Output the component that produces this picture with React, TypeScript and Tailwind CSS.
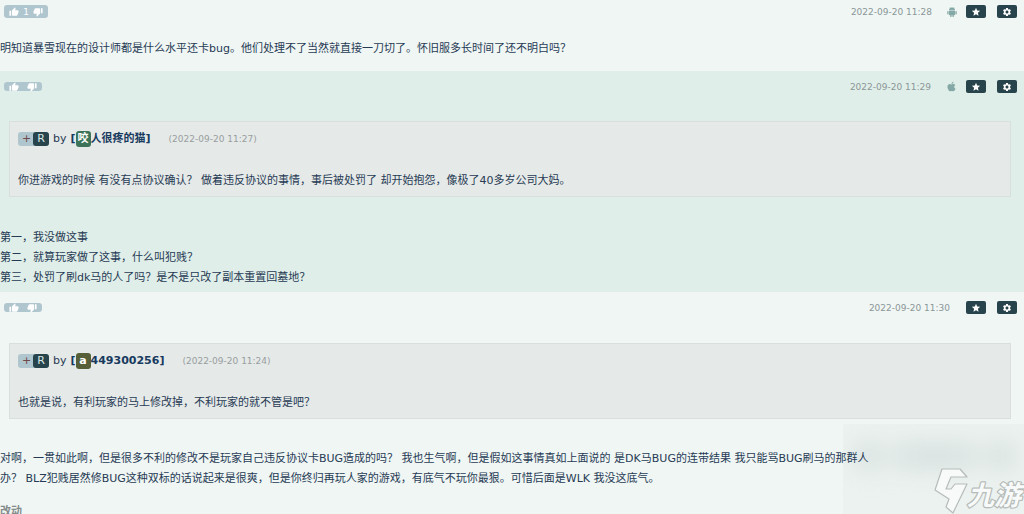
import type { ReactNode } from 'react';
import { FaApple } from 'react-icons/fa';
import { MdSettings, MdStar, MdThumbDown, MdThumbUp } from 'react-icons/md';

function AndroidIcon() {
  return (
    <svg viewBox="0 0 20 20" width="10" height="10" fill="currentColor" aria-hidden="true">
      <path d="M4 7a6 6 0 0 1 12 0zM4 8h12v7a1.5 1.5 0 0 1-1.500 1.500H13.500V20h-2.500v-3.500H9V20H6.500v-3.500H5.500A1.500 1.500 0 0 1 4 15z" />
      <rect x="0.500" y="8" width="2.700" height="7" rx="1.300" />
      <rect x="16.800" y="8" width="2.700" height="7" rx="1.300" />
      <path d="m6 0 2 3M14 0l-2 3" stroke="currentColor" />
    </svg>
  );
}

function Votes({ count }: { count?: number }) {
  return (
    <div
      className={`flex items-center justify-between overflow-hidden rounded-[3px] bg-[#b0c6cf] px-[5px] text-[9px] text-white ${
        count ? 'h-[13px] w-11' : 'h-[9px] w-[38px]'
      }`}
    >
      <button type="button" aria-label="赞同" className="flex">
        <MdThumbUp size={10} />
      </button>
      {count ? <span className="leading-3">{count}</span> : null}
      <button type="button" aria-label="反对" className="flex">
        <MdThumbDown size={10} />
      </button>
    </div>
  );
}

function PostHeader({ count, date, device }: { count?: number; date: string; device?: ReactNode }) {
  return (
    <header className="flex h-[13px] items-center justify-between pr-[7px] pl-1">
      <Votes count={count} />
      <div className="flex items-center">
        <time className="text-[9px] leading-3 text-[#8b9798]">{date}</time>
        {device ? <span className="ml-[15px] flex text-[#83a8a5]">{device}</span> : null}
        <button
          type="button"
          aria-label="收藏"
          className={`flex h-[13px] w-5 items-center justify-center rounded-xs bg-[#27434b] text-white ${device ? 'ml-[9px]' : 'ml-4'}`}
        >
          <MdStar size={10} />
        </button>
        <button
          type="button"
          aria-label="设置"
          className="ml-[11px] flex h-[13px] w-5 items-center justify-center rounded-xs bg-[#27434b] text-white"
        >
          <MdSettings size={10} />
        </button>
      </div>
    </header>
  );
}

type QuoteProps = { initial: string; initialClass: string; name: string; date: string; children: ReactNode };

function Quote({ initial, initialClass, name, date, children }: QuoteProps) {
  return (
    <blockquote className="mr-[13px] ml-[9px] h-[76px] border border-[#d9dfdd] bg-[#e5e9e8] px-2">
      <div className="mt-2 flex h-[18px] items-center">
        <a href="#reply" className="flex h-[14px] items-center rounded-[3px] bg-[#b0c6cf] text-[11px] leading-[14px]">
          <span className="w-[15px] pl-1 text-[#704848]">+</span>
          <span className="w-4 rounded-[3px] bg-[#27434b] text-center text-[#d8e5e5]">R</span>
        </a>
        <span className="ml-1">by</span>
        <a href="#user" className="ml-1 flex items-center font-bold text-[#183a5e]">
          [
          <span className={`flex h-4 w-[15px] items-center justify-center rounded-[3px] text-white ${initialClass}`}>
            {initial}
          </span>
          {name}]
        </a>
        <time className="ml-[18px] text-[9px] text-[#989e9f]">({date})</time>
      </div>
      <p className="mt-[23px]">{children}</p>
    </blockquote>
  );
}

function Watermark() {
  return (
    <svg
      viewBox="0 0 90 46"
      role="img"
      aria-label="九游"
      className="absolute right-0 bottom-0 h-[46px] w-[90px]"
      fill="#f8faf9"
      stroke="#b6bcba"
      strokeWidth="1.2"
      strokeLinejoin="round"
    >
      <path d="M8 1h18l7 8H17l-5 12h5l4-5h12L19 45l-7-6 3-8L1 22z" />
      <text
        x="33"
        y="37"
        fontSize="27"
        fontWeight="700"
        fontStyle="italic"
        fontFamily="'Noto Sans CJK SC', sans-serif"
        strokeWidth="2.500"
        paintOrder="stroke"
      >
        九游
      </text>
    </svg>
  );
}

export default function App() {
  return (
    <main className="relative isolate h-screen overflow-hidden bg-[#f0f6f4] font-['DejaVu_Sans','Noto_Sans_CJK_SC',sans-serif] text-[11px] leading-5 text-[#273b54]">
      <article className="pt-[5px] pb-3">
        <PostHeader count={1} date="2022-09-20 11:28" device={<AndroidIcon />} />
        <p className="mt-[21px]">
          明知道暴雪现在的设计师都是什么水平还卡bug。他们处理不了当然就直接一刀切了。怀旧服多长时间了还不明白吗？
        </p>
      </article>

      <article className="bg-[#e0eee9] pt-[9px] pb-1">
        <PostHeader date="2022-09-20 11:29" device={<FaApple size={11} />} />
        <div className="mt-7">
          <Quote initial="咬" initialClass="bg-[#3c7359]" name="人很疼的猫" date="2022-09-20 11:27">
            你进游戏的时候 有没有点协议确认？ 做着违反协议的事情，事后被处罚了 却开始抱怨，像极了40多岁公司大妈。
          </Quote>
        </div>
        <p className="mt-[31px]">
          第一，我没做这事
          <br />
          第二，就算玩家做了这事，什么叫犯贱？
          <br />
          第三，处罚了刷dk马的人了吗？是不是只改了副本重置回墓地？
        </p>
      </article>

      <article className="pt-[9px]">
        <PostHeader date="2022-09-20 11:30" />
        <div className="mt-[29px]">
          <Quote initial="a" initialClass="bg-[#575f38]" name="449300256" date="2022-09-20 11:24">
            也就是说，有利玩家的马上修改掉，不利玩家的就不管是吧？
          </Quote>
        </div>
        <p className="mt-[30px]">
          对啊，一贯如此啊，但是很多不利的修改不是玩家自己违反协议卡BUG造成的吗？ 我也生气啊，但是假如这事情真如上面说的
          是DK马BUG的连带结果 我只能骂BUG刷马的那群人
          <br />
          办？ BLZ犯贱居然修BUG这种双标的话说起来是很爽，但是你终归再玩人家的游戏，有底气不玩你最狠。可惜后面是WLK
          我没这底气。
        </p>
        <h2 className="mt-[13px] font-bold text-[#848c8c]">改动</h2>
      </article>

      <div className="absolute right-0 bottom-0 -z-10 h-[90px] w-[181px] overflow-hidden bg-[#ecf2f0]">
        <div className="mt-5 ml-3 flex gap-3 blur-md">
          <span className="h-6 w-7 bg-[#d5e0de]" />
          <span className="h-6 w-20 bg-[#d5e0de]" />
          <span className="h-6 w-7 bg-[#d5e0de]" />
        </div>
        <Watermark />
      </div>
    </main>
  );
}
